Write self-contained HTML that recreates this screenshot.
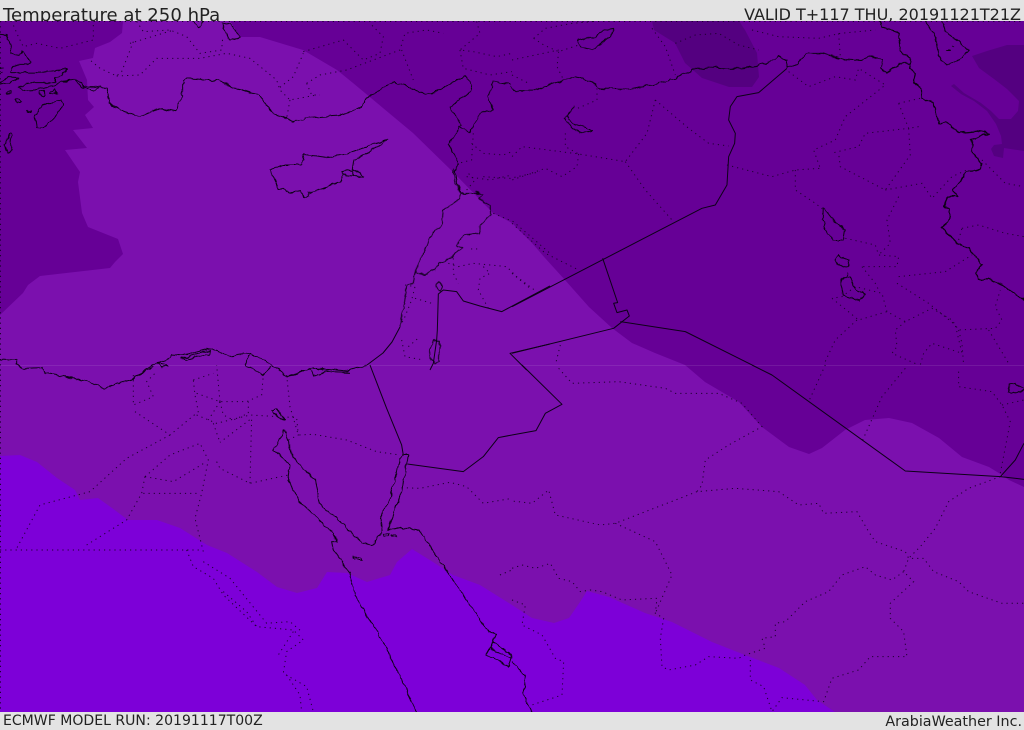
<!DOCTYPE html>
<html><head><meta charset="utf-8">
<style>
html,body{margin:0;padding:0;background:#e3e3e3}
body{width:1024px;height:729px;position:relative;overflow:hidden;font-family:"DejaVu Sans","Liberation Sans",sans-serif;color:#222}
.t{position:absolute;white-space:nowrap;line-height:1}
svg{position:absolute;left:0;top:21px}
path{fill:none;vector-effect:non-scaling-stroke}
.s path{stroke:#0d0018;stroke-width:1;stroke-linejoin:round}
.s path.b{stroke:#0a0012;stroke-width:1.3}
.d path{stroke:#1e0030;stroke-width:1;stroke-dasharray:1.2 4}
.f path{stroke:none}
</style></head><body>
<div class="t" style="left:3px;top:7px;font-size:18.1px">Temperature at 250 hPa</div>
<div class="t" style="right:3px;top:7px;font-size:16px">VALID T+117 THU, 20191121T21Z</div>
<div class="t" style="left:3px;top:714px;font-size:14.05px">ECMWF MODEL RUN: 20191117T00Z</div>
<div class="t" style="right:2px;top:715px;font-size:14.3px">ArabiaWeather Inc.</div>
<svg width="1024" height="691" viewBox="0 21 1024 691">
<defs>
<filter id="w" filterUnits="userSpaceOnUse" x="0" y="21" width="1024" height="691">
<feTurbulence type="fractalNoise" baseFrequency="0.14" numOctaves="2" seed="4"/>
<feDisplacementMap in="SourceGraphic" scale="4.5" xChannelSelector="R" yChannelSelector="G"/>
</filter>
</defs>
<rect x="0" y="21" width="1024" height="691" fill="#7b10ae"/>
<g class="f">
<path style="fill:#660096" d="M0,21L123,21 122,33 110,42 95,48 93,58 79,61 87,80 88,100 94,107 85,115 93,128 73,130 87,148 65,150 80,172 78,182 82,213 88,227 118,239 123,254 115,262 110,268 40,276 28,285 23,293 0,315Z"/>
<path style="fill:#660096" d="M230,21L240,37 260,37 303,50 337,70 353,83 377,103 413,133 453,172 493,213 512,223 532,243 545,258 565,280 589,307 612,328 632,343 655,353 685,365 705,382 739,402 762,427 789,447 809,454 822,448 845,430 865,420 889,418 912,423 939,438 962,457 989,467 1002,475 1009,480 1024,487L1024,21Z"/>
<path style="fill:#540080" d="M652,21L654,30 675,43 685,63 702,78 729,87 752,87 759,77 757,53 745,30 739,21Z"/>
<path style="fill:#540080" d="M972,56L987,51 1007,45 1024,45 1024,151 1004,148 1003,158 994,156 991,149 994,145 1002,144 1001,136 996,124 987,111 974,101 961,94 951,86 954,84 964,93 981,103 991,111 999,119 1011,119 1018,111 1019,101 1007,89 994,79 979,68Z"/>
<path style="fill:#7d00d8" d="M0,456L20,455 37,462 57,478 75,490 80,500 98,498 112,508 128,520 157,520 180,528 207,545 227,553 257,572 277,587 297,593 317,588 327,572 347,573 367,582 390,575 397,562 412,549 433,562 453,575 480,585 512,605 532,618 554,623 569,618 580,602 587,591 609,597 645,613 672,622 712,642 745,655 779,668 805,685 817,700 835,712 0,712Z"/>
</g>
<rect x="0" y="365" width="1024" height="1" fill="#fff" opacity=".09"/>
<g class="d">
<path d="M0,21.5H1024M.5,21V712"/>
<g transform="scale(.3333)">
<path d="M410,64L430,95 510,90 560,110 600,160 665,150 668,115M390,130L515,92M400,125L365,215 350,228 300,205 270,180M350,228L420,225 470,175 600,175 680,160 750,175 830,240 840,270 870,300 950,285M840,262L880,230 910,160M870,300L860,355M920,250L960,225 1040,210 1200,150 1215,100 1280,90 1330,100M920,250L935,285 960,285M280,75L280,120 240,130 180,145 110,130 70,140 55,110 40,75M910,155L1030,120 1090,180 1140,160 1150,110 1110,70M1430,64L1440,100 1380,150 1420,155 1490,170 1536,160M1380,150L1390,205 1470,225 1536,215M1205,150L1240,240M1420,400L1415,480 1375,490M1415,430L1450,460 1510,465 1536,455M1400,530L1470,540 1536,525"/>
</g>
<g transform="translate(512,0) scale(.3333)">
<path d="M65,115L100,85 180,70 250,64M65,115L95,135 140,155 200,135M140,155L135,200 155,240M0,180L140,150M420,85L460,140 490,225M490,130L550,105 620,100 680,135 740,150M720,90L800,110 920,115 985,100 1090,90M980,100L985,170M830,215L890,260 970,230 1030,240 1040,205 1120,255 1000,350 970,420 905,450 925,505M1160,310L1225,295M1160,310L1190,385 1060,400 1040,440 965,458M1190,385L1195,465 1120,570 985,500 980,460M1220,380L1190,385M255,265L255,300 190,328M0,225L50,250M430,300L405,400 340,485 200,462 30,440 0,470M430,300L530,385 590,430 650,438M645,495L780,530 850,510 925,505M850,510L850,570 910,610 935,630M1000,715L1090,735 1100,765 1160,770 1155,800 1050,800M1160,590L1125,660 1135,730 1100,765M1120,570L1230,550 1260,595 1320,530 1365,510M200,462L195,500 150,530 100,505 0,540M340,485L400,570 480,660M0,670L100,760 200,810M160,400L160,440 200,462M1350,685L1400,675 1480,700 1536,710M1340,720L1350,685M1160,830L1300,815 1380,765M1155,850L1250,910 1330,975 1350,1060 1260,1030 1235,1060 1225,1095M1050,800L1090,850 1100,870M960,895L1040,960 1125,935 1180,965 1260,925 1320,960 1340,990 1450,985 1470,960 1450,920 1465,870M1035,960L970,1020 935,1095M1125,935L1110,880 1030,860 990,890 960,895M1180,965L1150,990 1155,1040 1140,1060 1220,1095M1340,990L1350,1030 1355,1095M1410,480L1480,550 1536,560M1430,990L1490,1090M0,820L60,870M145,1035L130,1095"/>
</g>
<g transform="translate(0,365) scale(.3333)">
<path d="M400,30L400,120 460,95 440,50 470,20M405,140L510,210 595,140 585,90 580,45M510,210L380,280 270,380 120,420 50,550M435,335L520,350 620,290M435,335L510,270 600,235 625,285 605,385 585,460 610,560M435,335L425,385 380,465 260,540M430,385L600,385M0,555L600,555M650,290L660,310 750,355 865,330M750,355L755,160 660,232M640,175L660,232M590,150L650,175 750,150 890,158 895,210 865,225M660,110L650,0M590,85L660,110 740,110 785,90 790,30M580,45L640,25M660,110L625,165M660,110L670,150 700,165 745,145 745,110M860,30L870,125 895,210 940,208 1040,225 1130,260 1200,270M1205,368L1260,370 1350,352 1400,365 1450,415 1536,400M560,555L580,605 640,640 670,690 770,785 880,795 910,825 860,860 850,925 920,965 940,1040M610,590L690,640 800,775 870,770 905,800M670,680L740,740 770,785M880,800L835,870M860,930L900,990 905,1040M1500,630L1536,615"/>
</g>
<g transform="translate(512,365) scale(.3333)">
<path d="M1180,10L1110,95 1050,230M940,0L890,110M1340,20L1340,65 1440,80 1470,120 1495,170 1465,325M1470,120L1536,105M140,10L180,55 320,50 460,70 490,85 620,85 690,115 750,185 650,240 580,285 570,360 555,380 670,370 800,380 860,420 920,415 935,445 1035,440 1070,500 1090,530 1180,560 1190,580 1235,580 1265,620 1340,650 1370,680 1470,715 1536,715M1465,335L1370,370 1310,410 1270,490 1225,545 1190,580 1175,620 1205,650 1135,715 1135,760 1175,800 1185,875 1075,875 1040,915 960,940 935,1010 810,998 780,1040M1175,620L1140,645 1090,630 1060,605 990,630 950,680 880,710 820,770 790,775 790,815 750,820 760,850 700,870 680,880 590,875 550,900 470,915 450,905 445,820 455,760 430,745 435,700 330,705 270,680 235,675 205,680 180,650 140,640 115,595 70,610 30,600 0,610M555,380L310,475 265,480 130,450 110,375 60,415 0,408M310,475L430,530 480,630 430,745M715,885L715,945 755,965 780,1040M0,705L40,720 30,780 90,810 130,880 155,890 150,990 60,1020"/>
</g>
<g transform="translate(400,170) scale(.3333)">
<path d="M15,345L45,350 35,390 15,440 0,470M45,385L95,400M5,510L15,560 70,570M25,530L60,500M160,265L160,310 175,340M145,280L175,290M175,290L220,280 320,290 350,320 410,365M250,290L270,310 240,325 235,360 265,415M215,235V250M230,235V250M200,60L225,30 205,10M250,20L330,25 420,5M280,130L340,155 410,215 450,250"/>
</g>
</g>
<g class="s">
<!-- straight political borders -->
<g transform="translate(512,0) scale(.3333)">
<path d="M825,205L740,278 675,290 655,320 650,360 670,400 668,430 650,470 645,555 610,615 570,625 0,920M0,1060L305,985 352,948 345,930 315,938 305,910 317,908 272,775M325,965L520,995 720,1095"/>
</g>
<g transform="translate(512,365) scale(.3333)">
<path d="M30,0L150,118 100,145 72,197 0,210M780,30L1180,318 1465,335 1536,343M1465,335L1510,285 1536,235M720,0L780,30"/>
</g>
<g transform="translate(0,365) scale(.3333)">
<path d="M1110,0L1160,130 1205,240 1210,270M1222,297L1390,320 1450,275 1495,218 1536,210"/>
</g>
<g transform="translate(400,170) scale(.3333)">
<path d="M450,348L305,425 240,408 190,393 170,365 130,360 115,372 112,480 110,510 100,580 90,600M450,522L330,550 380,600"/>
</g>
<!-- wiggly coasts, rivers and lakes -->
<g filter="url(#w)">
<g transform="translate(0,21) scale(.3333)">
<path d="M0,40L20,42 30,65 32,95 60,100 65,90 75,105 90,120 85,130 60,130 40,135 35,155 60,155 120,155 170,148 203,145 190,155 185,165 165,170 165,185 105,185 75,190 55,200 75,208 105,205 160,195 172,190 185,180 220,175 245,182 250,197 280,197 295,195"/>
<path d="M0,185L25,168 55,170 30,183 5,190ZM20,215L30,212 32,218 22,220ZM45,235L55,235 65,245 50,247ZM118,212L133,208 135,225 120,222ZM150,212L165,206 170,215 150,218ZM80,270L95,268 93,273 80,273ZM105,285L125,255 185,237 190,250 165,290 130,320 110,318ZM27,335L35,335 30,365 38,385 25,398 12,370 25,355ZM0,140H10M0,150L8,155"/>
</g>
<g transform="scale(.3333)">
<path d="M190,245L225,238 245,262 280,270 300,258 322,268 325,310 350,325 395,345 420,350 480,325 525,335 548,290 548,240 565,235 650,242 700,262 775,285 820,340 880,365 930,352 1020,345 1065,330 1085,320 1100,295 1180,245 1215,255 1280,285 1320,270 1370,240 1395,228 1415,255 1410,275 1350,322 1385,375 1345,432 1375,490 1365,515 1380,578M1375,380L1410,395 1440,340 1480,330 1465,290 1480,242 1536,255"/>
<path d="M810,510L850,495 905,495 912,463 980,472 1040,462 1165,418 1130,440 1065,480 1060,505 1090,530 1060,528 1030,525 1020,545 960,570 925,578 925,590 912,590 900,572 875,578 835,565 825,540ZM1025,515L1060,510 1060,528 1030,525Z"/>
<path d="M665,68L690,72 722,112 690,122ZM580,64L595,85 610,64"/>
</g>
<g transform="translate(512,0) scale(.3333)">
<path d="M0,260L5,272 65,272 110,255 190,230 240,245 260,265 340,268 420,255 490,235 540,210 600,198 640,205 690,205 770,188 800,168 825,180 825,205 855,192 885,160 935,160 1000,180 1045,183 1075,168 1110,180 1105,205 1125,218 1165,190 1195,190"/>
<path class="b" d="M1105,64L1110,80 1160,100 1165,150 1195,175 1190,205 1210,220 1205,248 1230,265 1230,295 1265,310 1280,370 1300,368 1340,398 1395,392 1432,400 1380,420 1380,455 1408,490 1405,510 1365,515 1345,545 1325,570 1335,590 1305,590 1295,620 1315,630 1310,660 1290,683 1340,735 1370,745 1410,795 1390,818 1400,838 1430,838 1480,860 1536,900"/>
<path d="M185,320L175,335 158,355 175,380 205,400 240,390 215,380 180,370 165,350ZM195,120L220,115 250,115 262,95 305,85 295,110 240,150 205,140Z"/>
<path d="M1240,64L1270,110 1280,170 1305,195 1330,185 1370,155 1340,125 1300,95 1290,64M1305,150h10M1320,140h8"/>
</g>
<g transform="translate(800,170) scale(.3333)">
<path d="M70,115L80,125 100,150 135,180 130,210 100,210 75,180 68,150ZM115,255L125,262 148,270 145,290 130,292 105,275ZM140,305V318M130,320L150,320 170,360 195,370 180,393 130,375 122,340Z"/>
</g>
<g transform="translate(0,365) scale(.3333)">
<path d="M0,-18L50,-15 50,0 70,10 130,8 135,25 250,45 315,68 390,45 460,5M1100,0L1040,18 985,12 935,8 860,35M855,195L820,255 870,300 865,345 895,405 1000,505 1010,530 995,530 1000,555 1050,625 1065,690 1160,850 1250,1040M855,195L880,280 945,345 958,415 1090,535 1115,540 1145,500 1140,460 1170,400 1205,270 1225,270 1205,380 1165,495 1200,488 1260,495 1300,560 1350,630 1410,720 1465,800 1490,805 1470,850 1535,880M815,135L830,130 845,155 855,165 835,155ZM1150,505L1170,505 1165,515 1150,515ZM1175,510h12v5h-12ZM1062,575L1080,580 1083,588 1065,582Z"/>
<path d="M1460,865L1480,830 1505,850 1536,870 1525,905 1500,890 1460,870Z"/>
</g>
<g transform="translate(512,365) scale(.3333)">
<path d="M0,890L40,935 35,990 60,1040M1490,60L1510,55 1536,75 1520,85 1490,80Z"/>
</g>
<g transform="translate(130,340) scale(.3333)">
<path d="M660,97L600,95 550,82 470,108 425,75 360,38 300,48 240,25 160,45 125,42 120,55 80,68 0,120M155,55L240,30 238,42 165,58ZM360,38L345,75 380,95 400,105 425,80M470,108L540,85 550,105 600,95M80,68L115,75 95,82Z"/>
</g>
<g transform="translate(400,170) scale(.3333)">
<path d="M160,0L165,30 180,70 235,70 230,65 250,72 235,85 270,105 272,135 240,165 240,190 190,195 170,225 185,235 150,265 118,280 105,300 75,312 45,305M180,70L180,85 130,120 125,165 100,185 70,250 45,305 40,340 22,345 0,470M108,345L118,335 128,350 120,365 110,358ZM100,512L118,512 115,575 105,582 92,570 90,540Z"/>
</g>
</g>
<path d="M400,327L392,342 383,353 367,365" />
</g>
</svg>
</body></html>
